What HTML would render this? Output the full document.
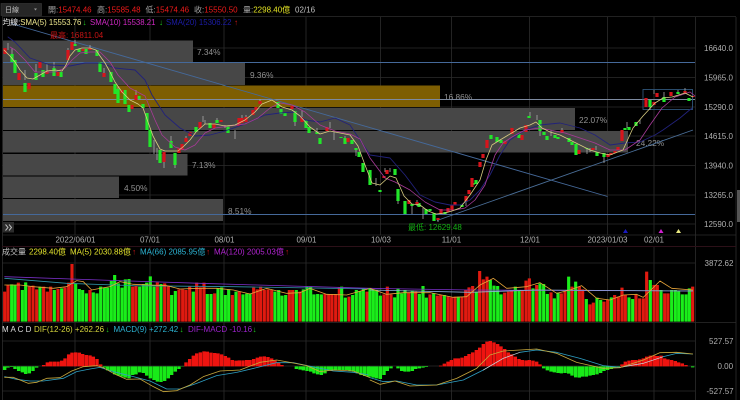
<!DOCTYPE html>
<html lang="zh-Hant">
<head>
<meta charset="utf-8">
<title>K線圖</title>
<style>
html,body{margin:0;padding:0;background:#000;width:740px;height:400px;overflow:hidden}
svg{display:block;filter:blur(.3px)}
text{font-family:"Liberation Sans","Noto Sans CJK TC",sans-serif;font-size:8px}
.g{fill:#a5a5a5}.r{fill:#ee1a1a}.w{fill:#c0c0c0}
.pct{fill:#929292;font-size:8.3px}
.ax{fill:#b0b0b0;font-size:8px}
.l{fill:none;stroke-linejoin:round;stroke-linecap:round}
</style>
</head>
<body>
<svg width="740" height="400" viewBox="0 0 740 400" xmlns="http://www.w3.org/2000/svg">
<rect width="740" height="400" fill="#000"/>

<!-- grid -->
<g stroke="#2c2c2c" stroke-width=".8" fill="none">
<path d="M2 16.500H736M2 48H695M2 77.500H695M2 107H695M2 136H695M2 165.500H695M2 195H695M2 224H695M2 235H736"/>
<path d="M75 17V235M150 17V235M224 17V235M306 17V235M380.500 17V235M451.500 17V235M529.500 17V235M607.500 17V235M654 17V235M695.500 17V400M736 17V400M2.500 17V400"/>
<path d="M2 263H695M2 322.500H736M2 341H695M2 366H695M2 391H695"/>
<path d="M75 247V400M150 247V400M224 247V400M306 247V400M380.500 247V400M451.500 247V400M529.500 247V400M607.500 247V400M654 247V400"/>
</g>
<path d="M2 246.500H736" stroke="#2c1018" stroke-width="1"/>

<!-- volume-profile bands -->
<g fill="#474747">
<rect x="3" y="40.500" width="190" height="21.500"/>
<rect x="3" y="63" width="242" height="22"/>
<rect x="3" y="108" width="572" height="22"/>
<rect x="3" y="131" width="625" height="21.500"/>
<rect x="3" y="154" width="184.500" height="21.500"/>
<rect x="3" y="176.500" width="116" height="21.500"/>
<rect x="3" y="199" width="220" height="22"/>
</g>
<rect x="3" y="85.500" width="437" height="21.500" fill="#7e5e02"/>
<rect x="3" y="222" width="11" height="10.500" fill="#2c2c2c"/>
<path d="M5.500 224.500l2.500 3-2.500 3M9 224.500l2.500 3-2.500 3" fill="none" stroke="#bbb" stroke-width="1"/>

<!-- percent labels -->
<text class="pct" x="197" y="55">7.34%</text>
<text class="pct" x="250" y="78">9.36%</text>
<text class="pct" x="444" y="100">16.86%</text>
<text class="pct" x="579" y="123">22.07%</text>
<text class="pct" x="636" y="146">24.22%</text>
<text class="pct" x="192" y="168">7.13%</text>
<text class="pct" x="124" y="191">4.50%</text>
<text class="pct" x="228" y="214">8.51%</text>

<!-- horizontal and trend lines -->
<g stroke="#45699a" stroke-width=".9" fill="none">
<path d="M3 62.500H695"/>
<path d="M3 99.500H695" stroke="#7d8aa0"/>
<path d="M3 214.500H695"/>
<path d="M11 23.500L607.500 196.500"/>
<path d="M437 220.500L693 130" stroke="#4a6e98"/>
<rect x="643" y="89.500" width="49.500" height="20" stroke="#2f5578"/>
</g>

<!-- wicks -->
<path d="M8 43V50M12 48V54M25 70V80M36 64V72M47 64V72M54 62V68M68 48V52M75 40V46M90 45V50M104 68V74M118 86V92M136 90V96M154 140V154M157 148V160M164 158V168M171 136V141M175 165V168M186 136V140M203 116V122M205 120V124M217 118V121M225 125V128M235 130V139M242 115V120M246 115V118M260 99V102M295 120V126M302 110V118M317 128V134M334 132V140M330 122V128M345 136V140M356 150V156M376 178V186M385 168V172M390 168V172M398 200V204M412 205V214M417 200V206M423 208V219M438 219V222M466 201V206M530 112V116M537 115V120M540 131V136M551 130V136M562 128V131M587 148V154M590 148V152M596 146V150M604 157V163M627 122V128M640 120V124M650 107V110M654 90V94M664 92V97M678 90V92M685 88V91" stroke="#a8a8a8" stroke-width=".8" fill="none"/>

<!-- candles green -->
<path d="M12 54V62M15 60V73M25 83V92M36 73V80M43 70V77M54 68V76M61 72V77M75 44V46M79 49V52M86 49V54M97 50V56M100 62V72M111 72V82M115 84V94M118 89V103M125 90V104M129 105V112M139 96V99M143 104V108M147 113V130M150 130V147M160 150V163M171 141V148M175 153V165M196 127V132M210 123V128M217 120V123M228 126V133M278 102V108M281 109V114M285 113V116M295 111V122M306 120V128M309 127V133M317 132V134M320 138V144M341 137V138M345 138V144M352 140V144M356 148V150M359 152V157M363 163V172M370 170V185M380 190V192M395 169V175M398 189V201M405 201V214M412 204V206M419 203V207M426 209V214M430 209V211M434 213V221M445 212V214M462 205V207M473 183V185M476 180V184M491 135V139M497 137V142M501 140V143M519 134V138M529 116V118M540 120V131M544 132V135M547 136V140M555 135V138M558 137V139M569 138V142M572 142V145M576 144V155M587 148V149M597 152V156M604 153V157M625 128V130M629 127V130M636 122V126M650 100V107M664 97V102M678 92V94M689 98V101" stroke="#22e62a" stroke-width="3.200" fill="none"/>

<!-- candles red -->
<path d="M5 48V54M19 73V80M29 83V89M40 62V68M47 71V74M58 72V76M68 50V60M72 42V50M83 49V51M90 48V50M104 73V77M122 90V93M132 105V109M136 95V100M164 152V162M179 148V153M182 144V150M186 138V142M190 132V136M200 122V128M214 124V128M221 120V122M239 118V126M242 118V123M246 117V122M253 110V115M256 107V110M260 101V104M292 106V109M302 117V122M327 127V131M348 138V142M384 176V178M387 170V174M409 200V204M417 202V204M438 218V220M441 209V214M448 208V212M452 205V210M455 202V205M466 196V201M469 190V194M472 178V187M480 162V167M483 154V158M487 140V148M505 141V144M512 128V134M522 135V140M526 125V132M562 130V133M579 150V154M593 148V150M608 154V157M611 153V155M615 151V153M618 147V150M622 130V141M646 98V107M654 102V105M657 93V97M671 92V96M685 91V93M693 96V97" stroke="#d8141c" stroke-width="3.200" fill="none"/>

<!-- moving averages -->
<polyline class="l" stroke="#22227a" stroke-width=".9" points="8,37 15,42 30,58 50,65 70,66 85,63 100,63 115,68 135,70 145,80 152,95 165,115 180,128 195,136 210,135 225,131 245,124 265,115 280,113 295,112 305,120 320,122 335,118 350,125 370,155 390,158 405,175 420,195 435,202 450,205 460,205 470,200 480,190 490,175 500,155 510,140 525,130 540,125 560,123 580,128 595,135 610,145 625,143 640,142 655,135 663,130 680,118 692,108"/>
<polyline class="l" stroke="#a83a98" stroke-width=".8" points="10,47 15,50 25,60 35,72 45,72 55,72 65,68 72,60 80,53 90,52 100,52 110,62 118,75 130,88 145,96 155,120 162,135 175,147 185,150 195,145 205,133 215,128 230,126 245,124 258,118 270,108 280,103 292,105 305,112 320,125 335,131 350,134 360,139 370,158 385,178 395,182 410,190 425,202 440,210 455,210 465,208 475,200 485,185 490,170 495,155 503,143 512,137 525,130 540,128 550,130 565,133 580,138 595,143 610,150 625,150 640,140 650,125 662,108 675,97 690,92 695,96"/>
<polyline class="l" stroke="#d8cc80" stroke-width=".8" points="4,50 10,56 15,62 20,70 27,78 33,79 40,75 47,71 55,70 62,71 66,65 70,56 75,50 82,48 90,48 96,50 100,56 105,63 110,72 115,82 122,92 130,100 138,104 143,108 148,122 153,136 160,149 165,151 172,151 178,151 184,146 190,140 196,132 205,124 215,124 225,126 235,125 245,120 255,112 262,104 272,100 282,107 292,110 300,116 310,127 320,134 330,131 340,133 350,135 358,146 365,165 372,183 380,185 390,176 396,178 404,196 412,204 420,205 428,211 436,214 445,213 452,211 460,208 470,195 480,180 486,160 492,145 500,140 510,134 520,128 530,125 536,122 542,128 550,132 560,135 570,140 580,145 590,150 600,153 610,155 623,150 633,128 643,116 655,103 663,98 672,97 685,93 693,97"/>

<!-- signal triangles -->
<path d="M625.500 229l2.500 4h-5z" fill="#1a1ac0"/>
<path d="M661 229l2.500 4h-5z" fill="#d020d0"/>
<path d="M678.500 229l2.500 4h-5z" fill="#e8e880"/>

<!-- high / low labels -->
<text x="50" y="38" fill="#c81414">最高: 16811.04</text>
<text x="408" y="230" fill="#14b014">最低: 12629.48</text>

<!-- top bar -->
<rect x="1" y="3.500" width="40.500" height="12" fill="#262626" stroke="#3a3a3a" stroke-width=".6"/>
<text x="5" y="12" class="w" style="font-size:7px">日線</text>
<path d="M34 8.500h3l-1.500 2z" fill="#999"/>
<g>
<text x="48" y="12.500"><tspan class="g">開:</tspan><tspan class="r">15474.46</tspan></text>
<text x="97" y="12.500"><tspan class="g">高:</tspan><tspan class="r">15585.48</tspan></text>
<text x="145.500" y="12.500"><tspan class="g">低:</tspan><tspan class="r">15474.46</tspan></text>
<text x="194" y="12.500"><tspan class="g">收:</tspan><tspan class="r">15550.50</tspan></text>
<text x="243" y="12.500"><tspan class="g">量:</tspan><tspan fill="#e4e424">2298.40億</tspan></text>
<text x="295" y="12.500" class="w">02/16</text>
</g>
<text x="2.500" y="25" style="font-size:7.8px"><tspan fill="#eee">均線:</tspan><tspan fill="#efe88f">SMA(5) 15553.76</tspan></text>
<text x="82.500" y="25" fill="#1ec81e">↓</text>
<text x="90" y="25" fill="#d028c4" style="font-size:7.8px">SMA(10) 15538.21</text>
<text x="159" y="25" fill="#1ec81e">↓</text>
<text x="166" y="25" fill="#1c1ca8" style="font-size:7.8px">SMA(20) 15306.22</text>
<text x="234" y="25" fill="#d01818">↑</text>

<!-- y axis price -->
<g class="ax">
<text class="ax" x="704" y="51">16640.0</text>
<text class="ax" x="704" y="80.500">15965.0</text>
<text class="ax" x="704" y="110">15290.0</text>
<text class="ax" x="704" y="139">14615.0</text>
<text class="ax" x="704" y="168.500">13940.0</text>
<text class="ax" x="704" y="198">13265.0</text>
<text class="ax" x="704" y="227">12590.0</text>
<text class="ax" x="704.500" y="266">3872.62</text>
<text class="ax" x="709" y="344">527.57</text>
<text class="ax" x="717.500" y="369">0.00</text>
<text class="ax" x="706.500" y="394">-527.57</text>
</g>

<!-- scrollbar handle -->
<rect x="737" y="190" width="3" height="32" fill="#555"/>

<!-- x axis -->
<g class="ax" text-anchor="middle">
<text class="ax" x="75.500" y="242.500">2022/06/01</text>
<text class="ax" x="150" y="242.500">07/01</text>
<text class="ax" x="224.500" y="242.500">08/01</text>
<text class="ax" x="306.500" y="242.500">09/01</text>
<text class="ax" x="381" y="242.500">10/03</text>
<text class="ax" x="451.500" y="242.500">11/01</text>
<text class="ax" x="530" y="242.500">12/01</text>
<text class="ax" x="607.500" y="242.500">2023/01/03</text>
<text class="ax" x="654" y="242.500">02/01</text>
</g>

<!-- volume header -->
<text x="2" y="254.500" fill="#c0c0c0">成交量</text>
<text x="29" y="254.500" fill="#e2e22c">2298.40億</text>
<text x="70" y="254.500" fill="#e2e22c">MA(5) 2030.88億</text>
<text x="132" y="254.500" fill="#d01818">↑</text>
<text x="140" y="254.500" fill="#2cb4d4">MA(66) 2085.95億</text>
<text x="206" y="254.500" fill="#d01818">↑</text>
<text x="214" y="254.500" fill="#b424d4">MA(120) 2005.03億</text>
<text x="285" y="254.500" fill="#d01818">↑</text>

<!-- MACD header -->
<text x="2" y="332" fill="#dcdcdc">M A C D</text>
<text x="34" y="332" fill="#d4d43c">DIF(12-26) +262.26</text>
<text x="105.500" y="332" fill="#1ec81e">↓</text>
<text x="113.500" y="332" fill="#2cb4d4">MACD(9) +272.42</text>
<text x="179.500" y="332" fill="#1ec81e">↓</text>
<text x="188" y="332" fill="#9c22cc">DIF-MACD -10.16</text>
<text x="252.500" y="332" fill="#1ec81e">↓</text>

<!-- left half: volume + MACD (coords in 3x units) -->
<g transform="translate(0,245) scale(.33333)">
<path stroke="#e01a10" stroke-width="9.400" fill="none" d="M14 140V230M24 120V230M55 113V230M88 125V230M99 122V230M110 133V230M131 125V230M142 140V230M152 125V230M174 132V230M195 128V230M206 113V230M216 57V230M270 135V230M398 125V230M408 123V230M472 112V230M494 115V230M505 122V230M537 133V230M548 133V230M558 135V230M569 125V230M590 113V230M601 127V230M612 113V230M644 145V230M697 150V230M718 140V230M761 128V230M772 133V230M782 125V230M793 135V230M804 133V230M815 135V230M868 135V230M878 135V230M900 140V230M975 147V230M986 147V230M996 147V230M1007 147V230M1018 128V230M1047 155V230M1101 140V230"/>
<path stroke="#1aee1a" stroke-width="9.400" fill="none" d="M35 118V230M45 120V230M67 135V230M77 112V230M120 125V230M163 135V230M185 130V230M227 115V230M238 132V230M248 135V230M259 145V230M280 142V230M291 145V230M302 125V230M313 128V230M323 128V230M334 108V230M344 90V230M355 115V230M366 128V230M376 103V230M387 102V230M419 125V230M430 117V230M440 113V230M451 94V230M462 125V230M483 117V230M515 150V230M526 138V230M580 140V230M622 147V230M633 147V230M654 130V230M665 127V230M676 150V230M686 133V230M708 140V230M729 148V230M740 146V230M750 145V230M825 140V230M836 135V230M846 152V230M857 150V230M889 135V230M910 133V230M921 125V230M932 125V230M942 148V230M953 147V230M964 148V230M1025 125V230M1036 158V230M1058 150V230M1069 135V230M1080 138V230M1090 132V230"/>
<polyline class="l" stroke="#2f94a8" stroke-width="2.400" points="14,100 200,115 400,122 700,125 1110,132"/>
<polyline class="l" stroke="#7a30c8" stroke-width="2.400" points="14,95 300,105 600,115 1110,130"/>
<polyline class="l" stroke="#e8a63a" stroke-width="2.400" points="14,120 60,120 100,125 160,130 200,125 230,107 250,110 275,135 300,130 330,125 360,110 400,118 450,120 500,122 540,132 600,130 650,130 700,135 750,147 800,130 860,145 900,143 930,130 980,148 1040,150 1110,130"/>

<path stroke="#18ea18" stroke-width="10.200" fill="none" d="M14 364V375M24 364V368M35 364V366M45 364V372M56 364V378M67 364V382M77 364V387M88 364V385M99 364V378M110 364V368M313 364V368M323 364V376M334 364V380M344 364V388M355 364V392M366 364V395M376 364V398M387 364V400M398 364V390M408 364V388M419 364V382M430 364V384M440 364V392M451 364V400M462 364V405M472 364V410M483 364V411M494 364V408M505 364V400M515 364V390M526 364V380M537 364V372M548 364V365M889 364V372M900 364V374M910 364V376M921 364V378M932 364V380M942 364V385M953 364V388M964 364V390M975 364V385M986 364V376M996 364V375M1007 364V375M1018 364V375M1029 364V375M1040 364V375M1050 364V378M1061 364V380M1072 364V385M1083 364V390M1094 364V393M1105 364V395"/>
<path stroke="#ee1410" stroke-width="10.200" fill="none" d="M131 364V360M142 364V352M152 364V350M163 364V350M174 364V350M185 364V347M195 364V340M206 364V328M216 364V323M227 364V322M238 364V323M248 364V327M259 364V330M270 364V331M280 364V335M291 364V342M302 364V358M558 364V352M569 364V342M580 364V332M590 364V325M601 364V322M612 364V319M622 364V320M633 364V323M644 364V324M654 364V325M665 364V328M676 364V333M686 364V338M697 364V345M708 364V347M718 364V346M729 364V346M740 364V345M750 364V345M761 364V342M772 364V338M782 364V335M793 364V334M804 364V336M815 364V340M825 364V347M836 364V352M846 364V360"/>
<polyline class="l" stroke="#2ea0c4" stroke-width="2.400" points="14,395 50,403 90,408 130,408 190,400 230,380 270,372 300,367 340,380 400,395 450,408 500,432 540,432 590,415 650,392 710,382 770,368 830,353 880,353 950,368 1000,378 1060,382 1110,390"/>
<polyline class="l" stroke="#c8a83c" stroke-width="2.400" points="14,397 40,397 60,405 85,415 110,412 140,400 180,398 215,378 250,365 290,362 310,368 340,385 380,403 420,402 460,425 490,440 530,437 570,420 610,395 660,378 720,375 780,352 830,345 870,352 920,362 960,380 1000,375 1060,378 1110,398"/>
</g>

<!-- right half: volume + MACD (coords in 3x units) -->
<g transform="translate(370,245) scale(.33333)">
<path stroke="#e01a10" stroke-width="9.400" fill="none" d="M42 148V230M52 125V230M63 148V230M116 143V230M137 140V230M180 148V230M202 152V230M212 150V230M234 155V230M244 157V230M255 155V230M276 155V230M287 135V230M297 127V230M308 123V230M329 78V230M340 103V230M351 95V230M404 143V230M415 140V230M425 135V230M457 135V230M468 107V230M478 100V230M500 120V230M543 142V230M574 145V230M585 140V230M606 125V230M628 125V230M638 133V230M660 178V230M670 173V230M702 170V230M713 165V230M734 150V230M745 155V230M756 128V230M766 150V230M798 150V230M809 160V230M820 160V230M830 80V230M852 120V230M862 120V230M884 145V230M894 145V230M968 125V230"/>
<path stroke="#1aee1a" stroke-width="9.400" fill="none" d="M0 130V230M10 133V230M20 135V230M31 152V230M74 157V230M84 130V230M95 145V230M105 135V230M127 137V230M148 147V230M159 123V230M169 158V230M191 145V230M223 150V230M265 155V230M319 140V230M361 105V230M372 122V230M383 123V230M393 148V230M436 125V230M447 137V230M489 130V230M510 115V230M521 117V230M532 147V230M553 160V230M564 143V230M596 95V230M617 110V230M649 162V230M681 158V230M692 165V230M724 157V230M777 157V230M788 162V230M841 105V230M873 135V230M905 135V230M916 135V230M926 138V230M937 148V230M948 148V230M958 130V230"/>
<polyline class="l" stroke="#7a30c8" stroke-width="2.400" points="0,130 300,135 968,138"/>
<polyline class="l" stroke="#8fb0d8" stroke-width="2.400" points="0,135 300,142 500,135 968,138"/>
<polyline class="l" stroke="#e8a63a" stroke-width="2.400" points="0,130 50,148 100,143 180,143 250,157 290,155 330,120 370,100 410,130 470,125 510,113 560,145 600,135 635,122 680,160 720,165 760,150 800,148 820,157 870,108 905,130 968,135"/>

<path stroke="#18ea18" stroke-width="10.200" fill="none" d="M0 364V395M10 364V398M20 364V400M31 364V402M42 364V390M52 364V378M63 364V370M84 364V370M95 364V378M105 364V380M116 364V380M127 364V378M137 364V372M148 364V370M159 364V368M169 364V366M521 364V370M532 364V376M543 364V380M553 364V382M564 364V384M574 364V385M585 364V384M596 364V386M606 364V392M617 364V397M628 364V398M638 364V395M649 364V395M660 364V392M670 364V390M681 364V388M692 364V384M702 364V378M713 364V375M724 364V372M734 364V368M745 364V366M968 364V367"/>
<path stroke="#ee1410" stroke-width="10.200" fill="none" d="M212 364V362M223 364V356M234 364V350M244 364V345M255 364V340M265 364V340M276 364V338M287 364V333M297 364V327M308 364V322M319 364V315M329 364V308M340 364V297M351 364V290M361 364V288M372 364V292M383 364V297M393 364V304M404 364V312M415 364V322M425 364V328M436 364V335M447 364V342M457 364V345M468 364V346M478 364V345M489 364V347M500 364V350M510 364V358M756 364V358M766 364V350M777 364V347M788 364V345M798 364V345M809 364V343M820 364V340M830 364V335M841 364V332M852 364V332M862 364V333M873 364V332M884 364V340M894 364V343M905 364V345M916 364V348M926 364V352M937 364V355M948 364V360"/>
<polyline class="l" stroke="#2ea0c4" stroke-width="2.400" points="0,398 40,410 80,408 140,420 200,420 280,405 340,375"/>
<polyline class="l" stroke="#c8d8e0" stroke-width="2.200" points="340,375 400,340 450,322"/>
<polyline class="l" stroke="#2ea0c4" stroke-width="2.400" points="450,322 500,315 560,322 630,340 700,362 750,367"/>
<polyline class="l" stroke="#c8d8e0" stroke-width="2.200" points="750,367 820,355 880,335"/>
<polyline class="l" stroke="#2ea0c4" stroke-width="2.400" points="880,335 920,325 968,327"/>
<polyline class="l" stroke="#c8a83c" stroke-width="2.400" points="0,405 30,418 75,408 120,423 200,420 260,400 320,370 360,330 400,318 450,315 500,312 560,325 620,352 700,370 750,368 820,345 870,323 920,322 968,327"/>
</g>
</svg>
</body>
</html>
